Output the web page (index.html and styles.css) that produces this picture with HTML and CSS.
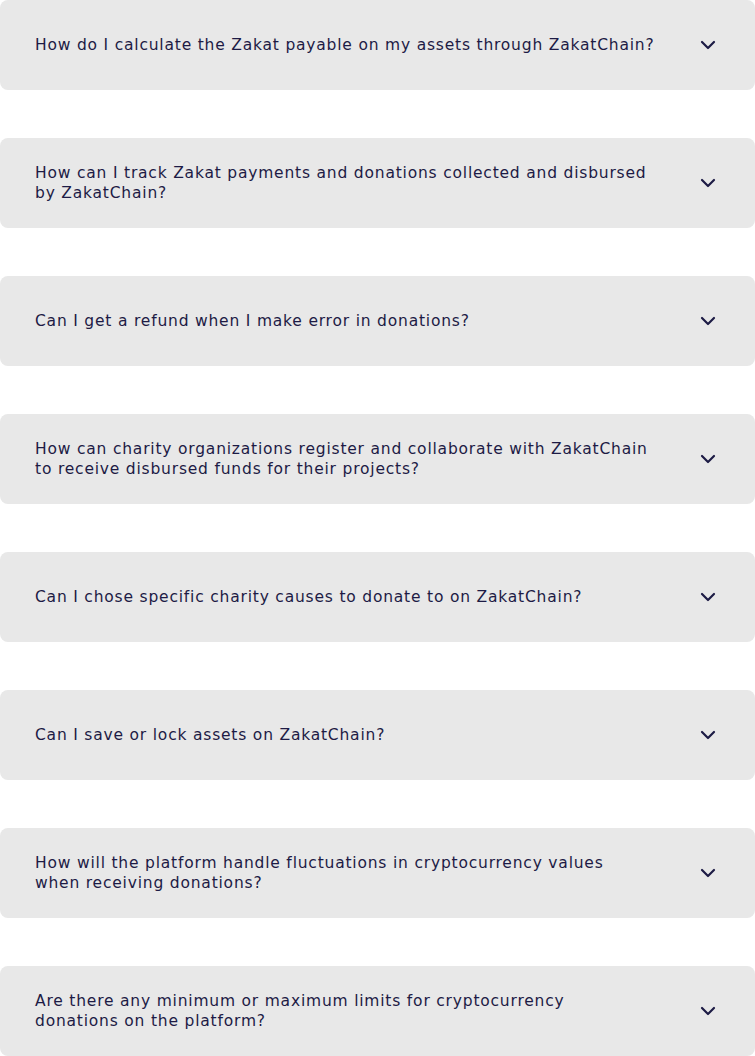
FILE: index.html
```html
<!DOCTYPE html>
<html>
<head>
<meta charset="utf-8">
<link rel="stylesheet" href="styles.css">
</head>
<body>
<div class="faq">
  <div class="item"><p class="q">How do I calculate the Zakat payable on my assets through ZakatChain?</p><svg class="chev" viewBox="0 0 16 10"><path d="M2 2l6 6 6-6"/></svg></div>
  <div class="item"><p class="q">How can I track Zakat payments and donations collected and disbursed by ZakatChain?</p><svg class="chev" viewBox="0 0 16 10"><path d="M2 2l6 6 6-6"/></svg></div>
  <div class="item"><p class="q">Can I get a refund when I make error in donations?</p><svg class="chev" viewBox="0 0 16 10"><path d="M2 2l6 6 6-6"/></svg></div>
  <div class="item"><p class="q">How can charity organizations register and collaborate with ZakatChain to receive disbursed funds for their projects?</p><svg class="chev" viewBox="0 0 16 10"><path d="M2 2l6 6 6-6"/></svg></div>
  <div class="item"><p class="q">Can I chose specific charity causes to donate to on ZakatChain?</p><svg class="chev" viewBox="0 0 16 10"><path d="M2 2l6 6 6-6"/></svg></div>
  <div class="item"><p class="q">Can I save or lock assets on ZakatChain?</p><svg class="chev" viewBox="0 0 16 10"><path d="M2 2l6 6 6-6"/></svg></div>
  <div class="item"><p class="q">How will the platform handle fluctuations in cryptocurrency values<br>when receiving donations?</p><svg class="chev" viewBox="0 0 16 10"><path d="M2 2l6 6 6-6"/></svg></div>
  <div class="item"><p class="q">Are there any minimum or maximum limits for cryptocurrency<br>donations on the platform?</p><svg class="chev" viewBox="0 0 16 10"><path d="M2 2l6 6 6-6"/></svg></div>
</div>
</body>
</html>
```
FILE: styles.css
```css
html, body { margin: 0; padding: 0; background: #fff; }
.faq { display: flex; flex-direction: column; gap: 48px; }
.item {
  display: flex; align-items: center; justify-content: space-between;
  height: 90px; box-sizing: border-box;
  padding: 0 39px 0 35px;
  background: #e8e8e8; border-radius: 8px;
}
.q {
  margin: 0; width: 620px;
  font-family: "DejaVu Sans", sans-serif; font-size: 15.5px; line-height: 20px;
  letter-spacing: 0.8px;
  color: #1d1b45;
}
.chev { width: 16px; height: 10px; flex: none; }
.chev path { fill: none; stroke: #1d1b45; stroke-width: 2.2; stroke-linecap: round; stroke-linejoin: round; }
```
